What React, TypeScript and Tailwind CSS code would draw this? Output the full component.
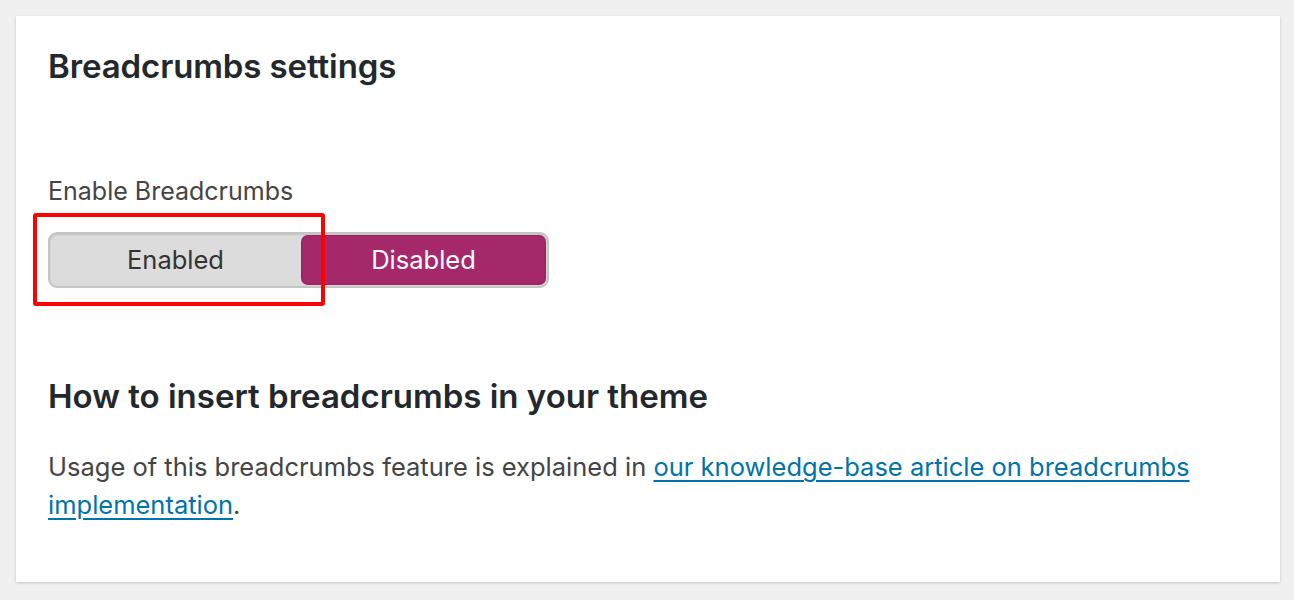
import React from "react";

export default function App() {
  return (
    <div className="min-h-[600px] w-full bg-[#f0f0f1] pt-4 pl-4 pr-[14px]" style={{ fontFamily: "Inter, 'Noto Sans', sans-serif" }}>
      <div className="h-[566px] w-[1264px] bg-white px-8 pt-[30px] shadow-[0_1px_3px_rgba(0,0,0,0.18)]">
        <h1 className="text-[33px] font-semibold leading-[40px] text-[#23282d] tracking-[-0.1px]">Breadcrumbs settings</h1>
        <div className="mt-[90px] text-[25px] leading-[30px] text-[#444]">Enable Breadcrumbs</div>
        <div className="relative mt-[26px] w-[501px]">
          <div className="absolute left-[-15px] top-[-19px] h-[93px] w-[292px] rounded-[3px] border-4 border-[#ff0000] z-10" />
          <div className="flex h-[56px] w-[501px] items-stretch rounded-[9px] border-2 border-[#c4c4c4] bg-[#dcdcdc] shadow-[inset_0_1px_2px_rgba(0,0,0,0.12)]">
            <div className="flex w-[251px] items-center justify-center text-[25.5px] text-[#333]">Enabled</div>
            <div className="my-[1px] mr-[1px] flex flex-1 items-center justify-center rounded-[7px] bg-[#a4286a] text-[25.5px] text-white shadow-[inset_0_0_2px_rgba(0,0,0,0.35)]">Disabled</div>
          </div>
        </div>
        <h2 className="mt-[88px] text-[33px] font-semibold leading-[40px] text-[#23282d]">How to insert breadcrumbs in your theme</h2>
        <p className="mt-[32px] text-[25.5px] leading-[38px] text-[#444]">
          Usage of this breadcrumbs feature is explained in{" "}
          <a href="#" className="text-[#0073aa] underline underline-offset-[4px] decoration-[2px]">our knowledge-base article on breadcrumbs implementation</a>.
        </p>
      </div>
    </div>
  );
}
